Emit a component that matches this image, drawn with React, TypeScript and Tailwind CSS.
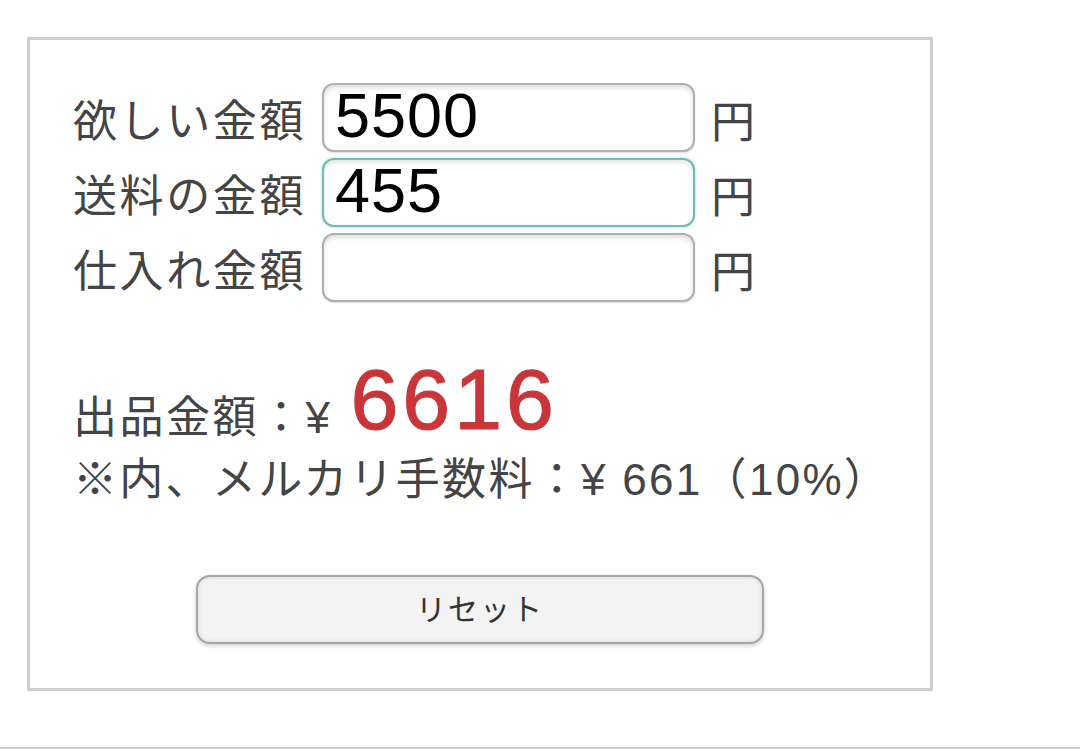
import React from "react";

const font = { fontFamily: '"Liberation Sans", "Noto Sans CJK JP", sans-serif' };

function Row({ label, value, focused }: { label: string; value: string; focused?: boolean }) {
  return (
    <div className="flex items-center h-[69px]">
      <div className="w-[249px] pt-[9px] text-[44px] leading-none tracking-[2.6px] text-[#444] whitespace-nowrap">{label}</div>
      <input
        readOnly
        defaultValue={value}
        className={
          "w-[373px] h-[69px] rounded-[12px] border-[2px] bg-white px-[11px] pb-[5px] text-[63px] tracking-[1px] leading-none text-black outline-none " +
          (focused
            ? "border-[#6cbdb5] shadow-[inset_0_3px_4px_rgba(0,0,0,0.10),0_0_3px_rgba(108,189,181,0.6)]"
            : "border-[#b0b0b0] shadow-[inset_0_3px_5px_rgba(0,0,0,0.13),0_1px_2px_rgba(0,0,0,0.15)]")
        }
        style={font}
      />
      <div className="ml-[16px] pt-[10px] text-[44px] leading-none text-[#444]">円</div>
    </div>
  );
}

export default function App() {
  return (
    <div className="w-[1080px] h-[749px] bg-white flex flex-col overflow-hidden" style={font}>
      <div className="pt-[37px] pl-[27px] flex-1">
        <div className="w-[906px] h-[654px] border-[3px] border-[#d0d0d0] bg-white pt-[43px] pl-[43px]">
          <div className="flex flex-col gap-[6px]">
            <Row label="欲しい金額" value="5500" />
            <Row label="送料の金額" value="455" focused />
            <Row label="仕入れ金額" value="" />
          </div>
          <div className="mt-[70px] flex items-end h-[70px] text-[#444]">
            <span className="text-[44px] leading-none tracking-[2.5px] mb-[2px]">出品金額：¥</span>
            <span className="ml-[18px] text-[86px] leading-none text-[#c9363a] tracking-[4px] [-webkit-text-stroke:1.2px_#c9363a]">
              6616
            </span>
          </div>
          <div className="mt-[16px] text-[44px] leading-none text-[#444] whitespace-nowrap tracking-[2.3px]">
            ※内、メルカリ手数料：¥ 661（10%）
          </div>
          <div className="mt-[73px] flex justify-center pr-[43px]">
            <button className="w-[568px] h-[69px] rounded-[14px] border-[2px] border-[#a6a6a6] bg-[#f3f3f3] shadow-[inset_0_0_5px_rgba(0,0,0,0.10),0_2px_4px_rgba(0,0,0,0.18)] text-[30px] text-[#333] tracking-[2px]">
              リセット
            </button>
          </div>
        </div>
      </div>
      <div className="h-[2px] bg-[#d0d0d0]" />
    </div>
  );
}
